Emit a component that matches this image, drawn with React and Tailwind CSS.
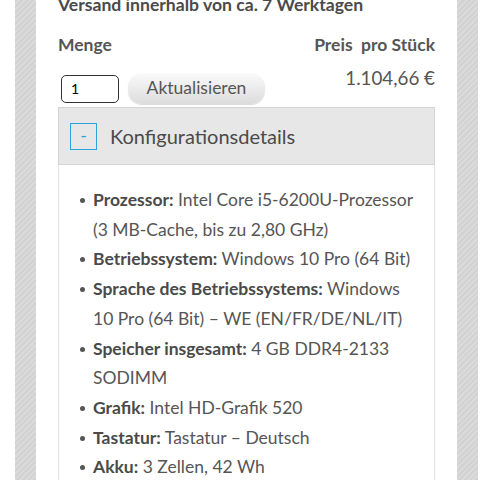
import { useState } from 'react'

const specs = [
  { label: 'Prozessor:', value: 'Intel Core i5-6200U-Prozessor (3 MB-Cache, bis zu 2,80 GHz)' },
  { label: 'Betriebssystem:', value: 'Windows 10 Pro (64 Bit)' },
  { label: 'Sprache des Betriebssystems:', value: 'Windows 10 Pro (64 Bit) – WE (EN/FR/DE/NL/IT)' },
  { label: 'Speicher insgesamt:', value: '4 GB DDR4-2133 SODIMM' },
  { label: 'Grafik:', value: 'Intel HD-Grafik 520' },
  { label: 'Tastatur:', value: 'Tastatur – Deutsch' },
  { label: 'Akku:', value: '3 Zellen, 42 Wh' },
  { label: 'Gewicht:', value: 'ab 1,54 kg' },
]

const stripe =
  'bg-[#d5d5d5] bg-[repeating-linear-gradient(135deg,#d2d2d2_0px,#d2d2d2_2px,#dadada_2px,#dadada_4px)]'

export default function App() {
  const [qty, setQty] = useState('1')
  const [open, setOpen] = useState(true)

  return (
    <div className="flex h-[480px] overflow-hidden bg-white font-['Lato','Liberation_Sans',sans-serif] text-[#4a4a4a]">
      <div className="w-[15px] shrink-0 bg-white" />
      <div className={`w-[21px] shrink-0 ${stripe}`} />

      <div className="flex-1 bg-white px-[22px]">
        <h2 className="mt-[-6px] text-[17.6px] font-bold leading-[22px] text-[#4a4a4a]">
          Versand innerhalb von ca. 7 Werktagen
        </h2>

        {/* Menge / Preis */}
        <div className="mt-[19px] flex items-start justify-between">
          <div>
            <div className="text-[17.5px] font-bold leading-[20px] text-[#555]">Menge</div>
            <div className="mt-[18px] flex items-center gap-[9px] pl-[3px]">
              <input
                type="text"
                value={qty}
                onChange={(e) => setQty(e.target.value)}
                className="h-[28px] w-[58px] rounded-[5px] border border-[#333] px-[9px] text-[14px] text-black outline-none"
              />
              <button
                type="button"
                className="h-[31px] w-[137px] rounded-[14px] bg-[linear-gradient(#fafafa,#dcdcdc)] text-[17.5px] text-[#555] shadow-[0_1px_1px_rgba(0,0,0,0.15)]"
              >
                Aktualisieren
              </button>
            </div>
          </div>
          <div className="text-right">
            <div className="text-[17.5px] font-bold leading-[20px] text-[#555]">Preis&nbsp; pro Stück</div>
            <div className="mt-[12px] text-[18.8px] leading-[22px] text-[#555]">1.104,66 €</div>
          </div>
        </div>

        {/* Konfigurationsdetails */}
        <div className="mt-[3px]">
          <div className="flex h-[58px] items-center border border-[#d4d4d4] bg-[#e7e7e7] pl-[11px]">
            <button
              type="button"
              onClick={() => setOpen((o) => !o)}
              className="flex h-[27px] w-[27px] items-center justify-center border-[1.5px] border-[#2ea3d9] pb-[2px] text-[18px] leading-none text-[#2ea3d9]"
            >
              {open ? '-' : '+'}
            </button>
            <span className="ml-[13px] text-[20px] text-[#4a4a4a]">Konfigurationsdetails</span>
          </div>
          {open && (
            <div className="border-x border-[#e2e2e2] pt-[20px] pb-4">
              <ul className="w-[361px] pl-[34px] text-[17.5px] leading-[29.7px] text-[#555]">
                {specs.map((s) => (
                  <li key={s.label} className="relative">
                    <span className="absolute left-[-13px] top-[13px] h-[5px] w-[5px] rounded-full bg-[#555]" />
                    <span className="font-bold text-[#4a4a4a]">{s.label}</span> {s.value}
                  </li>
                ))}
              </ul>
            </div>
          )}
        </div>
      </div>

      <div className={`w-[21px] shrink-0 ${stripe}`} />
      <div className="w-[2px] shrink-0 bg-white" />
    </div>
  )
}
